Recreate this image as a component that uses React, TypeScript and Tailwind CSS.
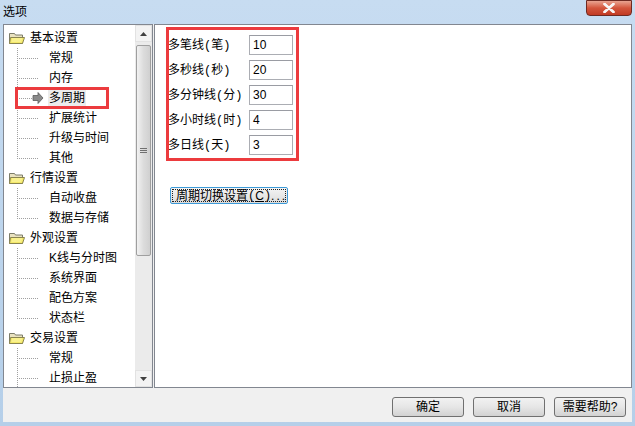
import React from "react";

const font = { fontFamily: '"Liberation Sans", "Noto Sans CJK SC", sans-serif' };
const mono = { fontFamily: '"Liberation Mono", monospace' };

type Group = { title: string; items: string[]; more?: boolean };

const groups: Group[] = [
  { title: "基本设置", items: ["常规", "内存", "多周期", "扩展统计", "升级与时间", "其他"] },
  { title: "行情设置", items: ["自动收盘", "数据与存储"] },
  { title: "外观设置", items: ["K线与分时图", "系统界面", "配色方案", "状态栏"] },
  { title: "交易设置", items: ["常规", "止损止盈"], more: true },
];

const periods = [
  { name: "多笔线", unit: "笔", value: "10" },
  { name: "多秒线", unit: "秒", value: "20" },
  { name: "多分钟线", unit: "分", value: "30" },
  { name: "多小时线", unit: "时", value: "4" },
  { name: "多日线", unit: "天", value: "3" },
];

function Folder() {
  return (
    <svg width="17" height="14" viewBox="0 0 17 14" className="shrink-0">
      <path d="M1.5 2.5h5l1 1.5h7v8.5h-13z" fill="#e9e2c0" stroke="#7d7d6a" />
      <path d="M2.5 6.5h14l-2 6h-13z" fill="#f4e96a" stroke="#8a8450" />
      <path d="M4 8h10M3.5 10h10" stroke="#fff9b0" />
    </svg>
  );
}

function Branch({ last, selected }: { last: boolean; selected?: boolean }) {
  const dots = [];
  for (let y = 0; y < (last ? 11 : 20); y += 2) dots.push(<rect key={"v" + y} x="13" y={y} width="1" height="1" fill="#a0a0a0" />);
  for (let x = 15; x < 34; x += 2) dots.push(<rect key={"h" + x} x={x} y="10" width="1" height="1" fill="#a0a0a0" />);
  return (
    <svg width="44" height="20" viewBox="0 0 44 20" className="shrink-0">
      {dots}
      {selected && <path d="M29 7.5h5v-3l5 5.5-5 5.5v-3h-5z" fill="#8a8a8a" stroke="#5a5a5a" strokeWidth="0.8" />}
    </svg>
  );
}

function Tree() {
  return (
    <div className="relative flex-1 overflow-hidden pt-[3px]">
      {groups.map((g) => (
        <div key={g.title}>
          <div className="flex h-[20px] items-center gap-[5px] pl-[4px] text-[12px] text-black">
            <Folder />
            <span>{g.title}</span>
          </div>
          {g.items.map((it, i) => {
            const sel = it === "多周期";
            return (
              <div key={it + i} className="flex h-[20px] items-center text-[12px] text-black">
                <Branch last={!g.more && i === g.items.length - 1} selected={sel} />
                <span className={sel ? "bg-[#ececec] px-[1px]" : "px-[1px]"}>{it}</span>
              </div>
            );
          })}
        </div>
      ))}
      <div className="absolute left-[11px] top-[62px] h-[22px] w-[94px] border-[3px] border-[#ec3b3e]" />
    </div>
  );
}

function Scrollbar() {
  return (
    <div className="flex w-[17px] flex-col bg-[#eaeaea]">
      <div className="flex h-[17px] items-center justify-center border border-[#e2e2e2] bg-[#f3f3f3]">
        <svg width="7" height="4" viewBox="0 0 7 4"><path d="M0 4L3.5 0 7 4z" fill="#404040" /></svg>
      </div>
      <div className="flex flex-1 flex-col bg-[#ebebeb] px-[1px]">
        <div className="mt-[3px] flex h-[211px] flex-col items-center justify-center gap-[1px] rounded-[2px] border border-[#9f9f9f] bg-gradient-to-r from-[#f2f2f2] via-[#dcdcdc] to-[#d0d0d0]">
          <div className="h-px w-[7px] bg-[#707070]" />
          <div className="h-px w-[7px] bg-[#707070]" />
          <div className="h-px w-[7px] bg-[#707070]" />
        </div>
        <div className="flex-1" />
      </div>
      <div className="flex h-[17px] items-center justify-center border border-[#e2e2e2] bg-[#f3f3f3]">
        <svg width="7" height="4" viewBox="0 0 7 4"><path d="M0 0L3.5 4 7 0z" fill="#404040" /></svg>
      </div>
    </div>
  );
}

function Btn({ children }: { children: React.ReactNode }) {
  return (
    <div className="flex h-[20px] w-[72px] items-center justify-center rounded-[3px] border border-[#707070] bg-gradient-to-b from-[#f2f2f2] via-[#e6e6e6] to-[#d2d2d2] text-[12px] text-black">
      {children}
    </div>
  );
}

export default function App() {
  return (
    <div className="flex h-[426px] w-[635px] flex-col bg-gradient-to-b from-[#c7dcf1] to-[#b5cfe9]" style={font}>
      <div className="flex h-[24px] items-start justify-between">
        <span className="pl-[3px] pt-[3px] text-[12px] text-black">选项</span>
        <div className="mr-[3px] flex h-[16px] w-[46px] items-center justify-center rounded-b-[4px] border border-[#6e2a22] bg-gradient-to-b from-[#e8a391] via-[#d3553c] to-[#c13a24]">
          <svg width="12" height="10" viewBox="0 0 12 10">
            <path d="M1.5 1l9 8M10.5 1l-9 8" stroke="#ffffff" strokeWidth="2.6" strokeLinecap="round" />
            <path d="M1.5 1l9 8M10.5 1l-9 8" stroke="#f4f4f4" strokeWidth="1.6" strokeLinecap="round" />
          </svg>
        </div>
      </div>
      <div className="mx-[3px] flex flex-1 flex-col bg-[#f0f0f0]">
        <div className="flex h-[364px] gap-[1px]">
          <div className="flex w-[150px] border border-[#828790] bg-white">
            <Tree />
            <Scrollbar />
          </div>
          <div className="flex-1 border border-[#828790] bg-white pl-[11px] pt-[2px]">
            <div className="flex w-[133px] flex-col gap-[5px] border-[3px] border-[#ec3b3e] pb-[3px] pr-[3px] pt-[5px]">
              {periods.map((p) => (
                <div key={p.name} className="flex h-[20px] items-center justify-between text-[12px] text-black">
                  <span className="-ml-[1px]">
                    {p.name}
                    <span style={mono}>(</span>
                    {p.unit}
                    <span style={mono}>)</span>
                  </span>
                  <div className="flex h-[20px] w-[44px] items-center border border-[#abadb3] border-t-[#9a9ca3] pl-[3px] text-[12px]">
                    {p.value}
                  </div>
                </div>
              ))}
            </div>
            <div className="ml-[4px] mt-[26px] flex h-[17px] w-[118px] items-center rounded-[2px] border border-[#3c9ad8] bg-gradient-to-b from-[#f4f4f4] to-[#dcdcdc] p-[1px]">
              <div className="flex h-full w-full items-center whitespace-nowrap border border-dotted border-[#202020] pl-[3px] text-[12px] leading-none text-black">
                周期切换设置
                <span style={mono}>(</span>
                <span className="underline">C</span>
                <span style={mono}>)</span>
                <span className="tracking-[2px]">...</span>
              </div>
            </div>
          </div>
        </div>
        <div className="flex flex-1 items-start justify-end gap-[9px] pr-[6px] pt-[9px]">
          <Btn>确定</Btn>
          <Btn>取消</Btn>
          <Btn>需要帮助?</Btn>
        </div>
      </div>
      <div className="h-[4px]" />
    </div>
  );
}
